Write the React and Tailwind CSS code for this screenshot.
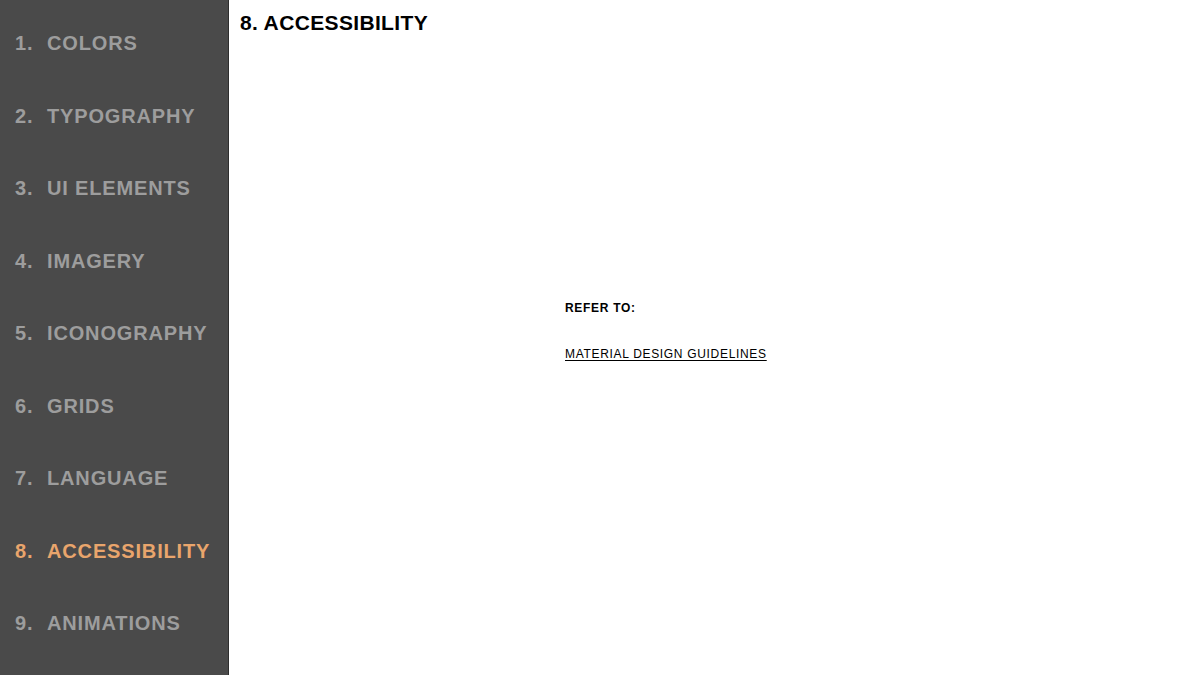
import React from "react";

const items = [
  "COLORS",
  "TYPOGRAPHY",
  "UI ELEMENTS",
  "IMAGERY",
  "ICONOGRAPHY",
  "GRIDS",
  "LANGUAGE",
  "ACCESSIBILITY",
  "ANIMATIONS",
];

export default function App() {
  return (
    <div
      className="flex w-[1200px] h-[675px] bg-white overflow-hidden"
      style={{ fontFamily: '"Liberation Sans", Arial, sans-serif' }}
    >
      <nav className="w-[229px] shrink-0 h-full bg-[#4a4a4a] border-r border-[#2e2e2e] pt-[7px] flex flex-col">
        {items.map((label, i) => (
          <div
            key={label}
            className={`h-[72.5px] flex items-center pl-[15px] text-[20px] font-bold tracking-[0.85px] ${
              i === 7 ? "text-[#e9a56c]" : "text-[#9d9d9d]"
            }`}
          >
            <span className="w-[32px]">{i + 1}.</span>
            <span>{label}</span>
          </div>
        ))}
      </nav>
      <main className="flex-1 relative">
        <h1 className="pl-[11px] pt-[10px] text-[21px] leading-[26px] font-bold tracking-[0.35px] text-black">
          8. ACCESSIBILITY
        </h1>
        <div className="pl-[336px] pt-[265px] flex flex-col">
          <p className="text-[12px] leading-[14px] font-bold tracking-[0.7px] text-black">
            REFER TO:
          </p>
          <a
            href="#"
            className="mt-[32px] text-[12px] leading-[14px] tracking-[0.68px] text-black underline underline-offset-2"
          >
            MATERIAL DESIGN GUIDELINES
          </a>
        </div>
      </main>
    </div>
  );
}
